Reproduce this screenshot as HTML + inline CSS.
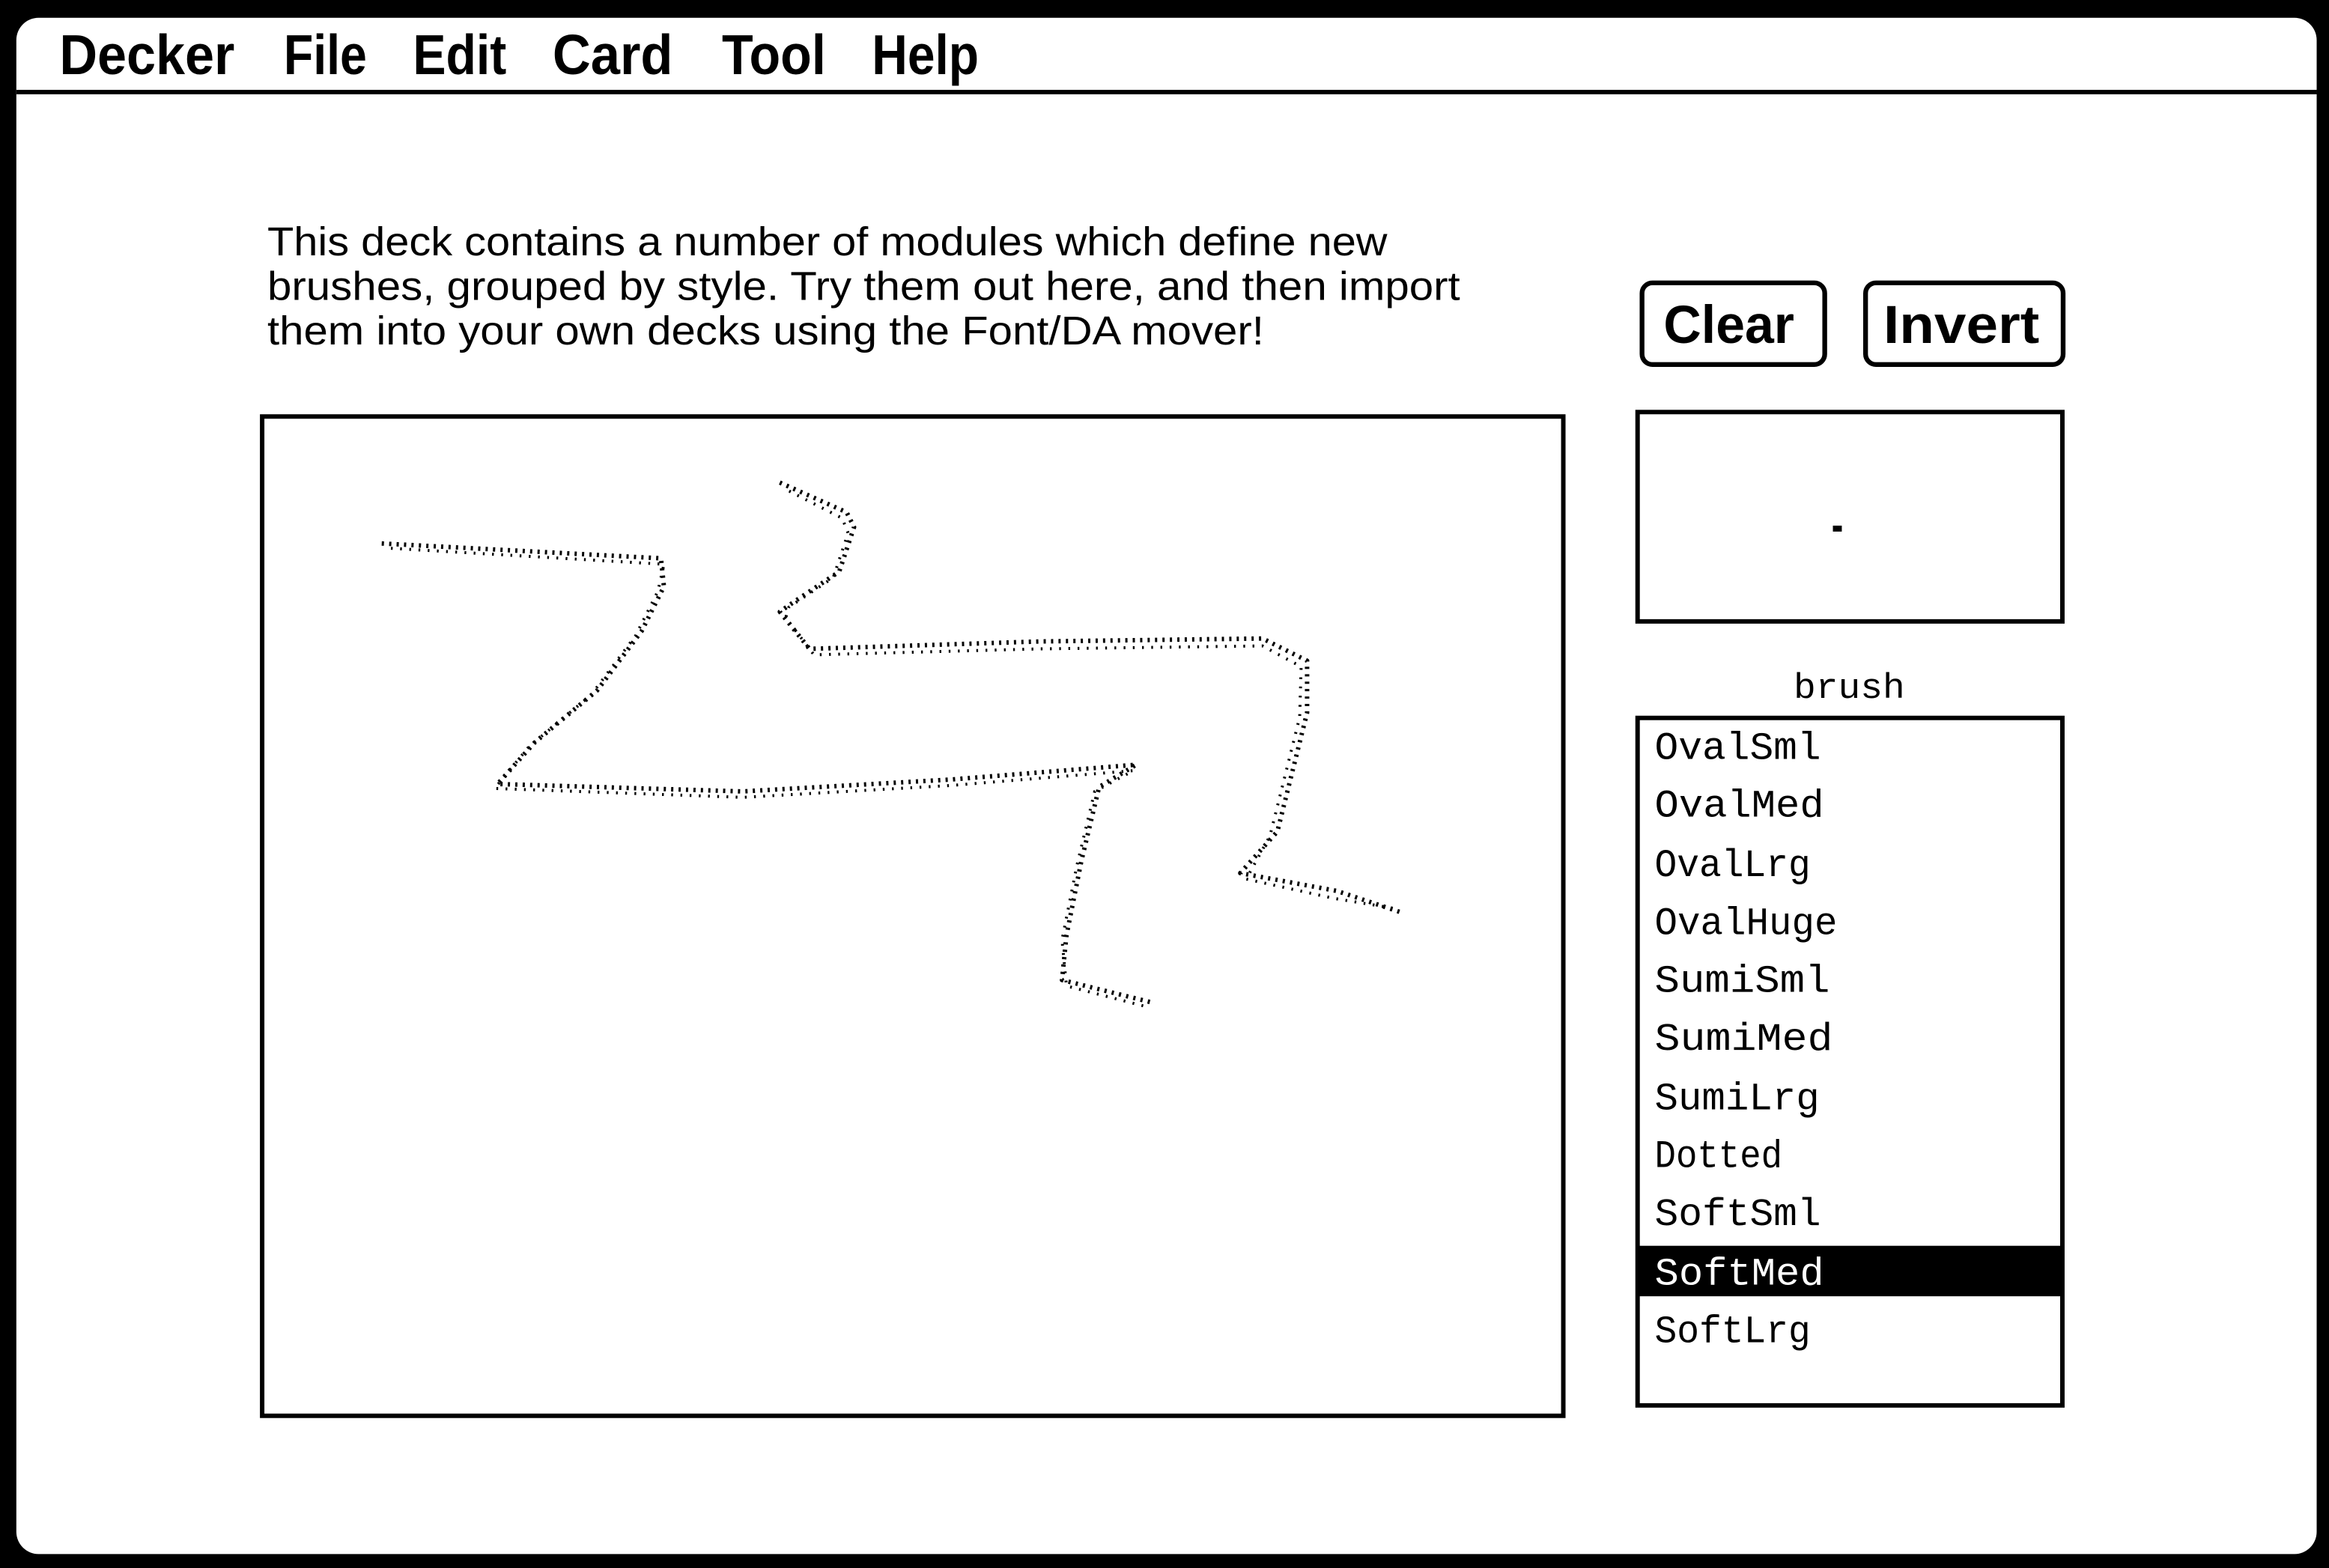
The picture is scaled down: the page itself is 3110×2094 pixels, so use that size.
<!DOCTYPE html>
<html><head><meta charset="utf-8"><style>
html,body{margin:0;padding:0;background:#000;}
svg{display:block;}
</style></head><body>
<svg width="3110" height="2094" viewBox="0 0 1568 1056" preserveAspectRatio="none" xmlns="http://www.w3.org/2000/svg">
<rect x="0" y="0" width="1568" height="1056" fill="#000"/>
<rect x="11" y="12" width="1548.7" height="1034.6" rx="15" ry="15" fill="#fff"/>
<rect x="11" y="60.5" width="1548.7" height="3" fill="#000"/>
<g font-family="Liberation Sans, sans-serif" font-weight="bold" font-size="38" fill="#000">
<text x="40" y="50" textLength="118" lengthAdjust="spacingAndGlyphs">Decker</text>
<text x="191" y="50" textLength="56" lengthAdjust="spacingAndGlyphs">File</text>
<text x="278" y="50" textLength="63" lengthAdjust="spacingAndGlyphs">Edit</text>
<text x="372" y="50" textLength="81" lengthAdjust="spacingAndGlyphs">Card</text>
<text x="486" y="50" textLength="70" lengthAdjust="spacingAndGlyphs">Tool</text>
<text x="587" y="50" textLength="72" lengthAdjust="spacingAndGlyphs">Help</text>
</g>
<g font-family="Liberation Sans, sans-serif" font-size="27" fill="#000">
<text x="180" y="172" textLength="754" lengthAdjust="spacingAndGlyphs">This deck contains a number of modules which define new</text>
<text x="180" y="202" textLength="803" lengthAdjust="spacingAndGlyphs">brushes, grouped by style. Try them out here, and then import</text>
<text x="180" y="232" textLength="671" lengthAdjust="spacingAndGlyphs">them into your own decks using the Font/DA mover!</text>
</g>
<rect x="1105.5" y="190.5" width="123" height="55" rx="7" fill="#fff" stroke="#000" stroke-width="3.2"/>
<rect x="1256" y="190.5" width="133" height="55" rx="7" fill="#fff" stroke="#000" stroke-width="3.2"/>
<g font-family="Liberation Sans, sans-serif" font-weight="bold" font-size="36" fill="#000">
<text x="1120" y="231" textLength="88" lengthAdjust="spacingAndGlyphs">Clear</text>
<text x="1268" y="231" textLength="105" lengthAdjust="spacingAndGlyphs">Invert</text>
</g>
<rect x="1102.5" y="277.5" width="286" height="141" fill="#fff" stroke="#000" stroke-width="3"/>
<rect x="1234" y="354" width="6" height="4" fill="#000"/>
<text x="1245" y="470" font-family="Liberation Mono, monospace" font-size="24" text-anchor="middle" textLength="75" lengthAdjust="spacingAndGlyphs">brush</text>
<rect x="1102.5" y="483.5" width="286" height="463" fill="#fff" stroke="#000" stroke-width="3"/>
<rect x="1102" y="839" width="287" height="34" fill="#000"/>
<g font-family="Liberation Mono, monospace" font-size="26" fill="#000">
<text x="1114" y="511" textLength="112" lengthAdjust="spacingAndGlyphs">OvalSml</text>
<text x="1114" y="550" textLength="114" lengthAdjust="spacingAndGlyphs">OvalMed</text>
<text x="1114" y="590" textLength="105" lengthAdjust="spacingAndGlyphs">OvalLrg</text>
<text x="1114" y="629" textLength="123" lengthAdjust="spacingAndGlyphs">OvalHuge</text>
<text x="1114" y="668" textLength="118" lengthAdjust="spacingAndGlyphs">SumiSml</text>
<text x="1114" y="707" textLength="120" lengthAdjust="spacingAndGlyphs">SumiMed</text>
<text x="1114" y="747" textLength="111" lengthAdjust="spacingAndGlyphs">SumiLrg</text>
<text x="1114" y="786" textLength="86" lengthAdjust="spacingAndGlyphs">Dotted</text>
<text x="1114" y="825" textLength="112" lengthAdjust="spacingAndGlyphs">SoftSml</text>
<text x="1114" y="865" textLength="114" lengthAdjust="spacingAndGlyphs" fill="#fff">SoftMed</text>
<text x="1114" y="904" textLength="105" lengthAdjust="spacingAndGlyphs">SoftLrg</text>
</g>
<rect x="176.5" y="280.5" width="876" height="673" fill="#fff" stroke="#000" stroke-width="3"/>
<g fill="none" stroke="#000" stroke-linejoin="round">
<path d="M257 366 L445 376 L447 395 L432 425 L402 465 L360 500 L335 528 L500 533 L640 525 L765 515 L740 530 L728 580 L718 630 L715 660 L775 675" stroke-width="3" stroke-dasharray="1.5 3.5"/>
<path d="M259 369 L447 380 L443 398 L428 428 L398 468 L356 503 L333 531 L500 537 L640 529 L763 519 L737 533 L725 583 L715 633 L718 664 L772 678" stroke-width="2" stroke-dasharray="1.2 5" stroke-dashoffset="2"/>
<path d="M525 325 L570 345 L575 355 L565 385 L535 405 L525 412 L545 437 L700 432 L850 430 L880 445 L880 480 L870 520 L860 560 L835 588 L900 600 L945 615" stroke-width="3" stroke-dasharray="1.5 3.5"/>
<path d="M528 329 L567 349 L571 359 L561 389 L531 409 L529 416 L548 441 L700 437 L850 435 L876 449 L875 483 L865 523 L855 563 L839 592 L898 605 L940 612" stroke-width="2" stroke-dasharray="1.2 5" stroke-dashoffset="2.5"/>
</g>
</svg>
</body></html>
